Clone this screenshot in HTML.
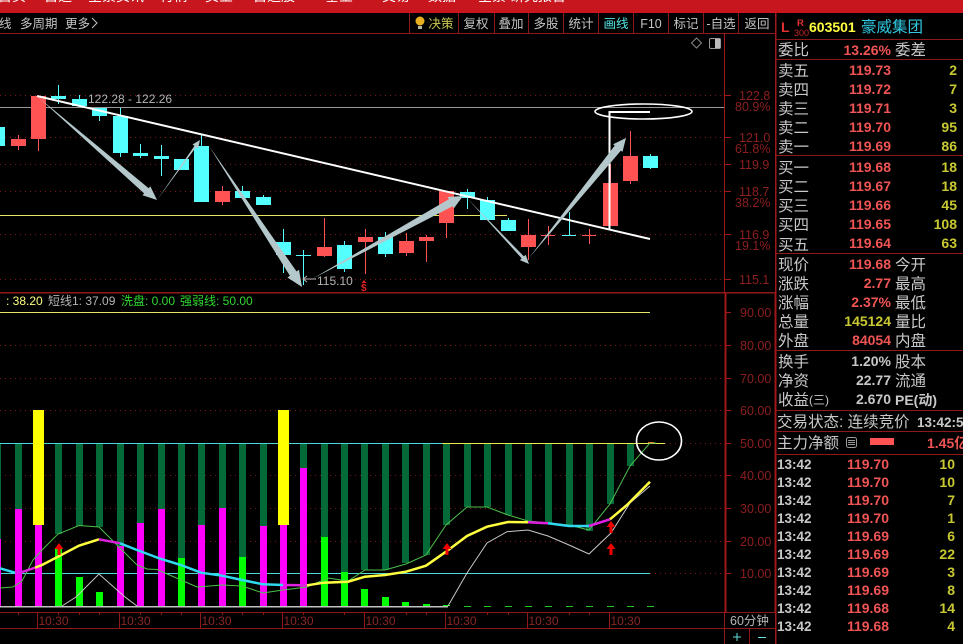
<!DOCTYPE html>
<html lang="zh">
<head>
<meta charset="utf-8">
<title>603501 豪威集团</title>
<style>
html,body{margin:0;padding:0;background:#000;width:963px;height:644px;overflow:hidden}
svg{display:block;position:absolute;left:0;top:0}
text{font-family:"Liberation Sans","WenQuanYi Zen Hei","Noto Sans CJK SC",sans-serif;white-space:pre}
.r{fill:#ff5252}.c{fill:#54ffff}
.dg{fill:#046a38}.m{fill:#ff00ff}.g{fill:#00ff00}.y{fill:#ffff00}
.ax{font-size:12.5px;fill:#8e1f1f}
.t{font-size:12px;fill:#8a2626}
.tb{font-size:12.5px;fill:#c4c4c4;text-anchor:middle}
.lb{font-size:15.5px;fill:#c8c8c8}
.n{font-size:14px;font-weight:bold;fill:#f05454;text-anchor:end}
.ny{font-size:14px;font-weight:bold;fill:#c8c832;text-anchor:end}
.nw{font-size:14px;font-weight:bold;fill:#c8c8c8;text-anchor:end}
.tm{font-size:13.5px;font-weight:bold;fill:#c8c8c8}
.ar{fill:#b4c8cc}
.top{font-size:14px;fill:#fff}
</style>
</head>
<body>
<svg width="963" height="644" viewBox="0 0 963 644" xmlns="http://www.w3.org/2000/svg">
<rect width="963" height="644" fill="#000"/>

<!-- top bar -->
<rect width="963" height="13" fill="#c8161e"/>
<g class="top">
<text x="-2" y="1">首页</text><text x="44" y="1">自选</text><text x="88" y="1">全景资讯</text><text x="160" y="1">行情</text><text x="205" y="1">资金</text><text x="253" y="1">自选股</text><text x="325" y="1">基金</text><text x="382" y="1">交易</text><text x="428" y="1">数据</text><text x="478" y="1">全景</text><text x="510" y="1">研究报告</text>
</g>

<!-- toolbar -->
<g fill="#8c1a1a">
<rect x="0" y="33" width="776" height="1"/>
<rect x="409" y="13" width="1" height="20"/><rect x="458" y="13" width="1" height="20"/><rect x="494" y="13" width="1" height="20"/><rect x="528" y="13" width="1" height="20"/><rect x="563" y="13" width="1" height="20"/><rect x="598" y="13" width="1" height="20"/><rect x="633" y="13" width="1" height="20"/><rect x="668" y="13" width="1" height="20"/><rect x="703" y="13" width="1" height="20"/><rect x="738" y="13" width="1" height="20"/>
</g>
<text x="-1" y="28" font-size="12.5" fill="#c4c4c4">线</text>
<text x="20" y="28" font-size="12.5" fill="#c4c4c4">多周期</text>
<text x="65" y="28" font-size="12.5" fill="#c4c4c4">更多</text>
<path d="M92 18l5 5-5 5" fill="none" stroke="#c4c4c4" stroke-width="1"/>
<circle cx="420" cy="21" r="4.5" fill="#e8b020"/><rect x="418" y="26" width="4" height="3" fill="#b8b8a0"/>
<text x="441" y="28" class="tb" style="fill:#c8c850">决策</text>
<text x="476" y="28" class="tb">复权</text>
<text x="511" y="28" class="tb">叠加</text>
<text x="546" y="28" class="tb">多股</text>
<text x="581" y="28" class="tb">统计</text>
<text x="616" y="28" class="tb" style="fill:#54e8e8">画线</text>
<text x="651" y="28" class="tb">F10</text>
<text x="686" y="28" class="tb">标记</text>
<text x="721" y="28" class="tb">-自选</text>
<text x="757" y="28" class="tb">返回</text>

<!-- main grid -->
<g stroke="#7c1515" stroke-width="1" stroke-dasharray="1 4" shape-rendering="crispEdges">
<path d="M0 95.5H724M0 137.5H724M0 164.5H724M0 191.5H724M0 234.5H724M0 279.5H724"/>
</g>
<rect x="0" y="107" width="724" height="1" fill="#999"/>
<rect x="0" y="215" width="507" height="1" fill="#e8e860"/>
<rect x="724" y="34" width="1" height="259" fill="#a01818"/>
<rect x="0" y="292" width="776" height="1.5" fill="#8f1818"/>

<!-- axis ticks main -->
<g fill="#a01818">
<rect x="725" y="95" width="6" height="1"/><rect x="725" y="137" width="6" height="1"/><rect x="725" y="164" width="6" height="1"/><rect x="725" y="191" width="6" height="1"/><rect x="725" y="234" width="6" height="1"/><rect x="725" y="279" width="6" height="1"/>
</g>
<g class="ax">
<text x="739" y="100">122.8</text><text x="735" y="111">80.9%</text>
<text x="739" y="142">121.0</text><text x="735" y="153">61.8%</text>
<text x="739" y="169">119.9</text>
<text x="739" y="196">118.7</text><text x="735" y="207">38.2%</text>
<text x="739" y="239">116.9</text><text x="735" y="250">19.1%</text>
<text x="739" y="284">115.1</text>
</g>

<!-- diamond + icon -->
<path d="M696.5 38l5 5-5 5-5-5z" fill="none" stroke="#888" stroke-width="1"/>
<rect x="709.5" y="38.5" width="11" height="10" rx="1.5" fill="none" stroke="#999"/><rect x="715" y="39" width="5" height="9" fill="#bbb"/>

<!-- candles -->
<g class="r">
<rect x="18" y="135" width="1" height="15"/><rect x="11" y="139" width="15" height="7"/>
<rect x="38" y="96" width="1" height="55"/><rect x="31" y="96" width="15" height="43"/>
<rect x="222" y="186" width="1" height="19"/><rect x="215" y="191" width="15" height="11"/>
<rect x="324" y="218" width="1" height="39"/><rect x="317" y="247" width="15" height="9"/>
<rect x="365" y="229" width="1" height="45"/><rect x="358" y="237" width="15" height="5"/>
<rect x="406" y="233" width="1" height="23"/><rect x="399" y="241" width="15" height="12"/>
<rect x="426" y="235" width="1" height="27"/><rect x="419" y="237" width="15" height="4"/>
<rect x="446" y="191" width="1" height="47"/><rect x="439" y="191" width="15" height="32"/>
<rect x="528" y="219" width="1" height="41"/><rect x="521" y="235" width="15" height="12"/>
<rect x="548" y="226" width="1" height="19"/><rect x="541" y="235" width="14" height="1"/>
<rect x="589" y="229" width="1" height="15"/><rect x="582" y="235" width="14" height="1"/>
<rect x="610" y="164" width="1" height="62"/><rect x="603" y="183" width="15" height="43"/>
<rect x="630" y="131" width="1" height="53"/><rect x="623" y="156" width="15" height="25"/>
</g>
<g class="c">
<rect x="0" y="127" width="5" height="19"/>
<rect x="58" y="85" width="1" height="19"/><rect x="51" y="96" width="15" height="3"/>
<rect x="79" y="95" width="1" height="11"/><rect x="72" y="99" width="15" height="7"/>
<rect x="99" y="108" width="1" height="13"/><rect x="92" y="108" width="15" height="8"/>
<rect x="120" y="108" width="1" height="49"/><rect x="113" y="116" width="15" height="37"/>
<rect x="140" y="144" width="1" height="14"/><rect x="133" y="153" width="15" height="3"/>
<rect x="161" y="145" width="1" height="31"/><rect x="154" y="156" width="15" height="3"/>
<rect x="174" y="159" width="15" height="11"/>
<rect x="201" y="135" width="1" height="67"/><rect x="194" y="146" width="15" height="56"/>
<rect x="242" y="186" width="1" height="12"/><rect x="235" y="191" width="15" height="7"/>
<rect x="263" y="195" width="1" height="10"/><rect x="256" y="197" width="15" height="8"/>
<rect x="283" y="229" width="1" height="44"/><rect x="276" y="242" width="15" height="13"/>
<rect x="303" y="250" width="1" height="35"/><rect x="296" y="255" width="15" height="1"/>
<rect x="344" y="241" width="1" height="31"/><rect x="337" y="245" width="15" height="24"/>
<rect x="385" y="232" width="1" height="25"/><rect x="378" y="237" width="15" height="17"/>
<rect x="467" y="189" width="1" height="20"/><rect x="460" y="192" width="15" height="6"/>
<rect x="487" y="197" width="1" height="23"/><rect x="480" y="200" width="15" height="20"/>
<rect x="508" y="218" width="1" height="13"/><rect x="501" y="220" width="15" height="11"/>
<rect x="569" y="212" width="1" height="23"/><rect x="562" y="235" width="14" height="1"/>
<rect x="650" y="154" width="1" height="15"/><rect x="643" y="156" width="15" height="12"/>
</g>

<!-- drawn lines -->
<path d="M37 96L650 239" stroke="#fff" stroke-width="2" fill="none"/>
<path d="M609.5 230V112H650" stroke="#fff" stroke-width="2" fill="none"/>
<ellipse cx="643.5" cy="111.5" rx="48.5" ry="7.5" fill="none" stroke="#fff" stroke-width="1.6"/>
<g class="ar">
<polygon points="38,97 148.700,188.200 150.300,186.300 157,200 142.500,195.300 144.100,193.400"/>
<polygon points="157,200 196.100,147.100 198.100,148.500 200,140 192.500,144.500 194.500,145.900"/>
<polygon points="209,146 296.500,271.400 299,269.700 302,287 287.400,277.500 289.900,275.800"/>
<polygon points="312,279 452.600,206.200 453.800,208.400 463,196 447.600,197 448.800,199.200"/>
<polygon points="467,198 523.900,256.400 525.700,254.700 529,264 519.900,260.100 521.700,258.400"/>
<polygon points="529,258 620.900,150.600 622.500,151.900 626,138 613.100,144.300 614.700,145.600"/>
</g>
<text x="88" y="103" font-size="12" fill="#b4b4b4">122.28 - 122.26</text>
<text x="317" y="285" font-size="12" fill="#b4b4b4">115.10</text>
<path d="M316 279H303M307 276l-4 3 4 3" fill="none" stroke="#b4b4b4" stroke-width="1"/>
<text x="361" y="291" font-size="10" font-weight="bold" fill="#e02020">$</text>
<path d="M364 280l-2.500 3h5z" fill="#e02020"/>

<!-- sub chart grid -->
<g stroke="#7c1515" stroke-width="1" stroke-dasharray="1 4" shape-rendering="crispEdges">
<path d="M0 345.500H724M0 378.500H724M0 410.500H724M0 443.500H724M0 475.500H724M0 508.500H724M0 541.500H724M0 573.500H724"/>
</g>
<rect x="0" y="312" width="650" height="1" fill="#e8e860"/>

<!-- indicator legend -->
<text x="6" y="305" font-size="12" fill="#ffff80">: 38.20</text>
<text x="48" y="305" font-size="12" fill="#b4b4b4">短线1: 37.09</text>
<text x="121" y="305" font-size="12" fill="#30d830">洗盘: 0.00</text>
<text x="180" y="305" font-size="12" fill="#30d830">强弱线: 50.00</text>

<!-- bars: dark green -->
<g class="dg">
<rect x="0" y="443" width="1" height="96"/>
<rect x="15" y="443" width="7" height="66"/>
<rect x="55" y="443" width="7" height="91"/>
<rect x="76" y="443" width="7" height="83"/>
<rect x="96" y="443" width="7" height="84"/>
<rect x="117" y="443" width="7" height="103"/>
<rect x="137" y="443" width="7" height="80"/>
<rect x="158" y="443" width="7" height="66"/>
<rect x="178" y="443" width="7" height="115"/>
<rect x="198" y="443" width="7" height="82"/>
<rect x="219" y="443" width="7" height="65"/>
<rect x="239" y="443" width="7" height="114"/>
<rect x="260" y="443" width="7" height="83"/>
<rect x="300" y="443" width="7" height="25"/>
<rect x="321" y="443" width="7" height="94"/>
<rect x="341" y="443" width="7" height="129"/>
<rect x="361" y="443" width="7" height="127"/>
<rect x="382" y="443" width="7" height="127"/>
<rect x="402" y="443" width="7" height="120"/>
<rect x="423" y="443" width="7" height="112"/>
<rect x="443" y="443" width="7" height="82"/>
<rect x="464" y="443" width="7" height="64"/>
<rect x="484" y="443" width="7" height="64"/>
<rect x="505" y="443" width="7" height="72"/>
<rect x="525" y="443" width="7" height="78"/>
<rect x="545" y="443" width="7" height="80"/>
<rect x="566" y="443" width="7" height="82"/>
<rect x="586" y="443" width="7" height="88"/>
<rect x="607" y="443" width="7" height="61"/>
<rect x="627" y="443" width="7" height="23"/>
</g>
<rect x="0" y="443" width="442" height="1" fill="#4fd8d8"/>
<rect x="442" y="443" width="223" height="1" fill="#e8e850"/>
<rect x="0" y="573" width="650" height="1" fill="#4fd8d8"/>

<!-- bars: magenta -->
<g class="m">
<rect x="0" y="539" width="1" height="67"/>
<rect x="15" y="509" width="7" height="97"/>
<rect x="35" y="525" width="7" height="81"/>
<rect x="117" y="546" width="7" height="60"/>
<rect x="137" y="523" width="7" height="83"/>
<rect x="158" y="509" width="7" height="97"/>
<rect x="198" y="525" width="7" height="81"/>
<rect x="219" y="508" width="7" height="98"/>
<rect x="260" y="526" width="7" height="80"/>
<rect x="280" y="525" width="7" height="81"/>
<rect x="300" y="468" width="7" height="138"/>
</g>
<!-- bars: bright green -->
<g class="g">
<rect x="55" y="549" width="7" height="57"/>
<rect x="76" y="577" width="7" height="29"/>
<rect x="96" y="592" width="7" height="14"/>
<rect x="178" y="558" width="7" height="48"/>
<rect x="239" y="557" width="7" height="49"/>
<rect x="321" y="537" width="7" height="69"/>
<rect x="341" y="572" width="7" height="34"/>
<rect x="361" y="589" width="7" height="17"/>
<rect x="382" y="597" width="7" height="9"/>
<rect x="402" y="602" width="7" height="4"/>
<rect x="423" y="604" width="7" height="2"/>
<rect x="443" y="605" width="7" height="1"/>
</g>
<!-- bars: yellow -->
<g class="y">
<rect x="33" y="410" width="11" height="115"/>
<rect x="278" y="410" width="11" height="115"/>
</g>
<!-- base line -->
<rect x="0" y="606" width="448" height="1.500" fill="#c0c0c0"/>
<g fill="#22c822">
<rect x="464" y="606" width="7" height="1"/><rect x="484" y="606" width="7" height="1"/><rect x="505" y="606" width="7" height="1"/><rect x="525" y="606" width="7" height="1"/><rect x="545" y="606" width="7" height="1"/><rect x="566" y="606" width="7" height="1"/><rect x="586" y="606" width="7" height="1"/><rect x="607" y="606" width="7" height="1"/><rect x="627" y="606" width="7" height="1"/><rect x="647" y="606" width="7" height="1"/>
</g>

<!-- thin lines -->
<path d="M0 588L13 587L22 581L33 560L42 550L58 534L79 525.500L99 527L120 548L137 565L147 569L157 569.500L181 580L197 587L222 585L242 586L263 593L283 590L307 587L328 578L348 581L365 570L385 570L406 564L426 555L446 525L467 507L480 507L487 507L508 515L528 521L548 523L569 525L589 530L610 504L630 466L650 443L656 443" fill="none" stroke="#4cc04c" stroke-width="1"/>
<path d="M62 606L76 597L99 574L125 597L137 606M448 606L467 573L487 543L507 531.700L528 530L548 536L569 545L589 554L611 533L630 503L650 486" fill="none" stroke="#c8c8c8" stroke-width="1"/>

<!-- thick line -->
<g fill="none" stroke-width="2.500">
<path d="M0 568.300L15 572.700" stroke="#30d8f0"/>
<path d="M15 572.700L22 572L35 567.700" stroke="#e020e0"/>
<path d="M35 567.700L42 565L58 556.700L79 545.700L99 539.300" stroke="#ffff40"/>
<path d="M99 539.300L120 543.300" stroke="#e020e0"/>
<path d="M120 543.300L137 550L161 559L181 565L201 572.700L222 575.700L242 580L263 584.300L283 585" stroke="#30d8f0"/>
<path d="M283 585L307 585.300" stroke="#e020e0"/>
<path d="M307 585.300L324 582.700L348 581.700L365 576.700L385 575L406 571.700L426 565.700L446 551.700L467 536L487 526.700L508 522L528 522.300" stroke="#ffff40"/>
<path d="M528 522.300L548 523.300" stroke="#e020e0"/>
<path d="M548 523.300L569 526L589 526" stroke="#30d8f0"/>
<path d="M589 526L610 519.300" stroke="#e020e0"/>
<path d="M610 519.300L627 505L650 481.700" stroke="#ffff40"/>
</g>
<rect x="648" y="442" width="6" height="1" fill="#e08030"/>
<ellipse cx="659" cy="441" rx="22.500" ry="19" fill="none" stroke="#fff" stroke-width="1.600"/>

<!-- red arrows -->
<g fill="#f00000">
<path d="M59 543l4.500 6h-3v6h-3v-6h-3z"/>
<path d="M447 543l4.500 6h-3v6h-3v-6h-3z"/>
<path d="M611 521l4.500 6h-3v6h-3v-6h-3z"/>
<path d="M611 543l4.500 6h-3v6h-3v-6h-3z"/>
</g>

<!-- sub axis -->
<rect x="724.500" y="293" width="2" height="319" fill="#a01818"/>
<rect x="774.500" y="293" width="2" height="319" fill="#a01818"/>
<g fill="#a01818">
<rect x="726" y="312" width="5" height="1"/><rect x="726" y="345" width="5" height="1"/><rect x="726" y="378" width="5" height="1"/><rect x="726" y="410" width="5" height="1"/><rect x="726" y="443" width="5" height="1"/><rect x="726" y="475" width="5" height="1"/><rect x="726" y="508" width="5" height="1"/><rect x="726" y="541" width="5" height="1"/><rect x="726" y="573" width="5" height="1"/>
</g>
<g class="ax" style="font-size:12.500px">
<text x="740" y="317">90.00</text><text x="740" y="350">80.00</text><text x="740" y="383">70.00</text><text x="740" y="415">60.00</text><text x="740" y="448">50.00</text><text x="740" y="480">40.00</text><text x="740" y="513">30.00</text><text x="740" y="546">20.00</text><text x="740" y="578">10.00</text>
</g>

<!-- time axis -->
<g fill="#8f1818">
<rect x="0" y="612" width="776" height="1"/><rect x="0" y="628" width="776" height="1"/>
<rect x="37" y="612" width="1" height="16"/><rect x="119" y="612" width="1" height="16"/><rect x="200" y="612" width="1" height="16"/><rect x="282" y="612" width="1" height="16"/><rect x="364" y="612" width="1" height="16"/><rect x="445" y="612" width="1" height="16"/><rect x="527" y="612" width="1" height="16"/><rect x="609" y="612" width="1" height="16"/>
<rect x="18" y="613" width="1" height="2"/><rect x="58" y="613" width="1" height="2"/><rect x="79" y="613" width="1" height="2"/><rect x="99" y="613" width="1" height="2"/><rect x="140" y="613" width="1" height="2"/><rect x="161" y="613" width="1" height="2"/><rect x="181" y="613" width="1" height="2"/><rect x="222" y="613" width="1" height="2"/><rect x="242" y="613" width="1" height="2"/><rect x="263" y="613" width="1" height="2"/><rect x="303" y="613" width="1" height="2"/><rect x="344" y="613" width="1" height="2"/><rect x="406" y="613" width="1" height="2"/><rect x="426" y="613" width="1" height="2"/><rect x="487" y="613" width="1" height="2"/><rect x="508" y="613" width="1" height="2"/><rect x="569" y="613" width="1" height="2"/><rect x="589" y="613" width="1" height="2"/>
</g>
<g class="t">
<text x="38.500" y="625">10:30</text><text x="120.500" y="625">10:30</text><text x="201.500" y="625">10:30</text><text x="283.500" y="625">10:30</text><text x="365.500" y="625">10:30</text><text x="446.500" y="625">10:30</text><text x="528.500" y="625">10:30</text><text x="610.500" y="625">10:30</text>
</g>
<rect x="724" y="612" width="1" height="32" fill="#8f1818"/>
<rect x="749" y="629" width="1" height="15" fill="#8f1818"/>
<text x="730" y="625" font-size="12.500" fill="#b8b8b8">60分钟</text>
<path d="M733 637h8M737 633v8" stroke="#60e0e0" stroke-width="1"/>
<rect x="758" y="637" width="8" height="1" fill="#60e0e0"/>

<!-- right panel -->
<rect x="775" y="13" width="1.500" height="631" fill="#a01818"/>
<g fill="#8f1818">
<rect x="776" y="39" width="187" height="1"/><rect x="776" y="59" width="187" height="1"/><rect x="776" y="155" width="187" height="1"/><rect x="776" y="253" width="187" height="1"/><rect x="776" y="350" width="187" height="1"/><rect x="776" y="410" width="187" height="1"/><rect x="776" y="431" width="187" height="1"/><rect x="776" y="454" width="187" height="1"/>
</g>
<text x="781" y="32" font-size="14" font-weight="bold" fill="#e03030">L</text>
<text x="797" y="26" font-size="9.500" font-weight="bold" fill="#e03030">R</text>
<text x="794" y="36" font-size="9" fill="#c02828">300</text>
<text x="809" y="32" font-size="14" font-weight="bold" fill="#ffff40">603501</text>
<text x="861" y="32" font-size="15.500" fill="#30c8e0">豪威集团</text>

<g class="lb">
<text x="778" y="55">委比</text><text x="895" y="55">委差</text>
<text x="778" y="76">卖五</text><text x="778" y="95">卖四</text><text x="778" y="114">卖三</text><text x="778" y="133">卖二</text><text x="778" y="152">卖一</text>
<text x="778" y="173">买一</text><text x="778" y="192">买二</text><text x="778" y="211">买三</text><text x="778" y="230">买四</text><text x="778" y="250">买五</text>
<text x="778" y="270">现价</text><text x="895" y="270">今开</text>
<text x="778" y="289">涨跌</text><text x="895" y="289">最高</text>
<text x="778" y="308">涨幅</text><text x="895" y="308">最低</text>
<text x="778" y="327">总量</text><text x="895" y="327">量比</text>
<text x="778" y="346">外盘</text><text x="895" y="346">内盘</text>
<text x="778" y="367">换手</text><text x="895" y="367">股本</text>
<text x="778" y="386">净资</text><text x="895" y="386">流通</text>
<text x="778" y="405">收益</text><text x="809" y="404" style="font-size:12px">(三)</text><text x="895" y="405" font-weight="bold" style="font-size:14px">PE(动)</text>
<text x="777" y="427">交易状态: 连续竞价</text>
<text x="777" y="448">主力净额</text>
</g>
<text x="917" y="427" class="tm">13:42:52</text>
<rect x="846.500" y="437.500" width="10" height="10" rx="2" fill="none" stroke="#999"/><path d="M848 440.500h7M848 442.500h7M848 444.500h7" stroke="#999"/>
<rect x="870" y="438" width="24" height="7" fill="#ff5252"/>
<text x="927" y="448" font-size="14" font-weight="bold" fill="#f05454">1.45亿</text>

<g class="n">
<text x="891" y="55">13.26%</text>
<text x="891" y="75">119.73</text><text x="891" y="94">119.72</text><text x="891" y="113">119.71</text><text x="891" y="132">119.70</text><text x="891" y="151">119.69</text>
<text x="891" y="172">119.68</text><text x="891" y="191">119.67</text><text x="891" y="210">119.66</text><text x="891" y="229">119.65</text><text x="891" y="248">119.64</text>
<text x="891" y="269">119.68</text><text x="891" y="288">2.77</text><text x="891" y="307">2.37%</text><text x="891" y="345">84054</text>
</g>
<text x="891" y="326" class="ny">145124</text>
<g class="nw">
<text x="891" y="366">1.20%</text><text x="891" y="385">22.77</text><text x="891" y="404">2.670</text>
</g>
<g class="ny">
<text x="957" y="75">2</text><text x="957" y="94">7</text><text x="957" y="113">3</text><text x="957" y="132">95</text><text x="957" y="151">86</text>
<text x="957" y="172">18</text><text x="957" y="191">18</text><text x="957" y="210">45</text><text x="957" y="229">108</text><text x="957" y="248">63</text>
</g>

<!-- ticks -->
<g class="tm">
<text x="777" y="469">13:42</text><text x="777" y="487">13:42</text><text x="777" y="505">13:42</text><text x="777" y="523">13:42</text><text x="777" y="541">13:42</text><text x="777" y="559">13:42</text><text x="777" y="577">13:42</text><text x="777" y="595">13:42</text><text x="777" y="613">13:42</text><text x="777" y="631">13:42</text>
</g>
<g class="n">
<text x="889" y="469">119.70</text><text x="889" y="487">119.70</text><text x="889" y="505">119.70</text><text x="889" y="523">119.70</text><text x="889" y="541">119.69</text><text x="889" y="559">119.69</text><text x="889" y="577">119.69</text><text x="889" y="595">119.69</text><text x="889" y="613">119.68</text><text x="889" y="631">119.68</text>
</g>
<g class="ny">
<text x="955" y="469">10</text><text x="955" y="487">10</text><text x="955" y="505">7</text><text x="955" y="523">1</text><text x="955" y="541">6</text><text x="955" y="559">22</text><text x="955" y="577">3</text><text x="955" y="595">8</text><text x="955" y="613">14</text><text x="955" y="631">4</text>
</g>
</svg>
</body>
</html>
